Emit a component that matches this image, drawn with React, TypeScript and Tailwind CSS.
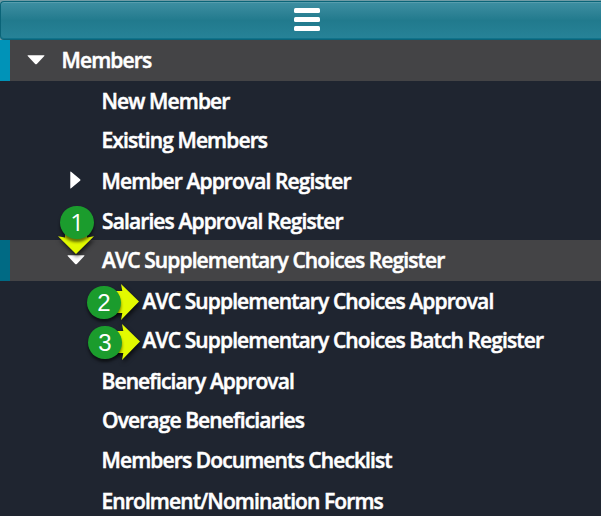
type Arrow = 'down' | 'right';

type Row = {
  label: string;
  size: string;
  indent: string;
  arrow?: Arrow;
  arrowPos?: string;
  accent?: string;
  marker?: number;
};

const rows: Row[] = [
  { label: 'Members', size: 'h-[41px] pb-0.5', indent: 'pl-[61.5px]', arrow: 'down', arrowPos: 'left-[27px] top-[15px]', accent: 'bg-[#0093b8]' },
  { label: 'New Member', size: 'h-10', indent: 'pl-[101.5px]' },
  { label: 'Existing Members', size: 'h-10 pb-0.5', indent: 'pl-[101.5px]' },
  { label: 'Member Approval Register', size: 'h-10', indent: 'pl-[101.5px]', arrow: 'right', arrowPos: 'left-[70px] top-[10px]' },
  { label: 'Salaries Approval Register', size: 'h-[39px] pt-px', indent: 'pl-[102px]' },
  { label: 'AVC Supplementary Choices Register', size: 'h-[41px] pb-0.5', indent: 'pl-[102px]', arrow: 'down', arrowPos: 'left-[66.5px] top-[15px]', accent: 'bg-[#006a84]', marker: 1 },
  { label: 'AVC Supplementary Choices Approval', size: 'h-10', indent: 'pl-[142.5px]', marker: 2 },
  { label: 'AVC Supplementary Choices Batch Register', size: 'h-10 pb-0.5', indent: 'pl-[142.5px]', marker: 3 },
  { label: 'Beneficiary Approval', size: 'h-10', indent: 'pl-[101.5px]' },
  { label: 'Overage Beneficiaries', size: 'h-10 pb-0.5', indent: 'pl-[102px]' },
  { label: 'Members Documents Checklist', size: 'h-10 pb-0.5', indent: 'pl-[101.5px]' },
  { label: 'Enrolment/Nomination Forms', size: 'h-10', indent: 'pl-[101.5px]' },
];

const markerPlace: Record<number, string> = {
  1: 'left-[56px] top-[-38px]',
  2: 'left-[83px] top-[2px]',
  3: 'left-[84px] top-[2px]',
};

function Caret({ direction, place }: { direction: Arrow; place: string }) {
  return direction === 'down' ? (
    <svg className={`absolute ${place}`} width="18" height="11" viewBox="0 0 18 11">
      <path d="M1 .3h16q.9 0 .3.8L9.8 8.9q-.8.8-1.6 0L.7 1.1Q.1.3 1 .3Z" fill="white" />
    </svg>
  ) : (
    <svg className={`absolute ${place}`} width="11" height="18" viewBox="0 0 11 18">
      <path d="M.3 1q0-.9.8-.3l9 7.5q.9.8 0 1.6l-9 7.5q-.8.6-.8-.3Z" fill="white" />
    </svg>
  );
}

/* Numbered callout with a pointer: down for 1, right for the others. */
function Marker({ value }: { value: number }) {
  const down = value === 1;
  return (
    <div className={`absolute z-10 h-[56px] w-[58px] ${markerPlace[value]}`}>
      <svg className="absolute inset-0 overflow-visible drop-shadow-[1px_3px_2px_rgba(0,0,0,0.65)]" width="58" height="56" viewBox="0 0 58 56">
        {down ? (
          <path d="M2 34.3l7 1.2V30h22v5.5l7-1.2L20 52Z" fill="#e2fa00" />
        ) : (
          <path d="M38 1L56 18.5 38 37l1.3-7H28V8h11.3Z" fill="#e2fa00" />
        )}
      </svg>
      <div
        className={`absolute left-[4px] flex h-[33px] w-[34px] items-center justify-center rounded-full bg-[#1b9c2d] leading-none text-white shadow-[0_3px_3px_rgba(0,0,0,0.55)] ${
          down ? "top-[4px] pb-px font-['Open_Sans',sans-serif] text-[24px]" : "top-[3px] font-['Liberation_Sans',Arial,sans-serif] text-[24px]"
        }`}
      >
        <span>{value}</span>
      </div>
    </div>
  );
}

export default function App() {
  return (
    <div className="flex h-[516px] w-[601px] flex-col overflow-hidden bg-[#1f2530] font-['Open_Sans',sans-serif]">
      <header className="h-10 shrink-0 bg-[#719ba5] pt-px">
        <button className="flex h-[39px] w-full items-start justify-center rounded-l-[4px] border-y border-l border-[#0a6478] border-b-[#0b6378] bg-linear-to-b from-[#3e8fa2] via-[#217a8d] to-[#278398] pl-[11px] pt-1.5 shadow-[inset_0_-1px_0_#11728a,inset_0_1px_0_#579dad]">
          <span className="flex flex-col gap-1">
            <span className="h-[5px] w-[26px] rounded-[1.5px] bg-white" />
            <span className="h-[5px] w-[26px] rounded-[1.5px] bg-white" />
            <span className="h-[5px] w-[26px] rounded-[1.5px] bg-white" />
          </span>
        </button>
      </header>
      <nav>
        {rows.map((row) => (
          <div key={row.label} className={`relative flex shrink-0 items-center ${row.size} ${row.indent} ${row.accent ? 'bg-[#444446]' : ''}`}>
            {row.accent && <span className={`absolute inset-y-0 left-0 w-[10px] ${row.accent}`} />}
            {row.arrow && row.arrowPos && <Caret direction={row.arrow} place={row.arrowPos} />}
            <span className="whitespace-nowrap text-[21px] font-semibold leading-[36px] tracking-[-0.89px] text-white [-webkit-text-stroke:0.5px_white]">{row.label}</span>
            {row.marker && <Marker value={row.marker} />}
          </div>
        ))}
      </nav>
    </div>
  );
}
